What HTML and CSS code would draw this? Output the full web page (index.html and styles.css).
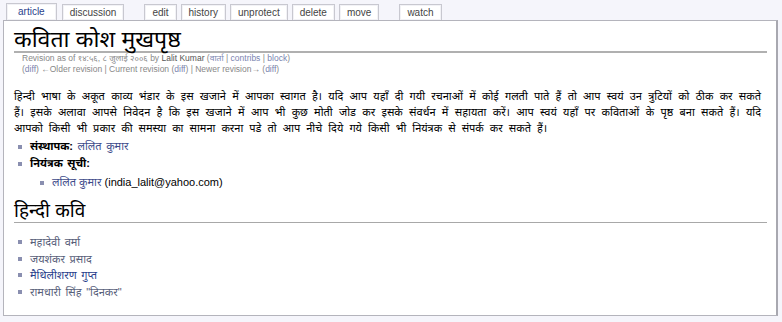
FILE: index.html
```html
<!DOCTYPE html>
<html lang="hi">
<head>
<meta charset="utf-8">
<title>कविता कोश मुखपृष्ठ</title>
<link rel="stylesheet" href="styles.css">
</head>
<body>
<div class="tabs">
  <a class="tab selected" href="#">article</a>
  <a class="tab" href="#">discussion</a>
  <span class="tab-gap"></span>
  <a class="tab" href="#">edit</a>
  <a class="tab" href="#">history</a>
  <a class="tab" href="#">unprotect</a>
  <a class="tab" href="#">delete</a>
  <a class="tab" href="#">move</a>
  <span class="tab-gap"></span>
  <a class="tab" href="#">watch</a>
</div>
<div class="content">
  <h1 class="title">कविता कोश मुखपृष्ठ</h1>
  <div class="sub">
    <div>Revision as of १४:५६, ८ जुलाई २००६ by <a class="user" href="#">Lalit Kumar</a> (<a href="#">वार्ता</a> | <a href="#">contribs</a> | <a href="#">block</a>)</div>
    <div>(<a href="#">diff</a>) ←Older revision | Current revision (<a href="#">diff</a>) | Newer revision→ (<a href="#">diff</a>)</div>
  </div>
  <p class="intro">हिन्दी भाषा के अकूत काव्य भंडार के इस खजाने में आपका स्वागत है। यदि आप यहाँ दी गयी रचनाओं में कोई गलती पाते हैं तो आप स्वयं उन त्रुटियों को ठीक कर सकते हैं। इसके अलावा आपसे निवेदन है कि इस खजाने में आप भी कुछ मोती जोड कर इसके संवर्धन में सहायता करें। आप स्वयं यहाँ पर कविताओं के पृष्ठ बना सकते हैं। यदि आपको किसी भी प्रकार की समस्या का सामना करना पडे तो आप नीचे दिये गये किसी भी नियंत्रक से संपर्क कर सकते हैं।</p>
  <ul class="list">
    <li><b>संस्थापक:</b> <a href="#">ललित कुमार</a></li>
    <li><b>नियंत्रक सूची:</b>
      <ul class="list sub-list">
        <li><a href="#">ललित कुमार</a> (india_lalit@yahoo.com)</li>
      </ul>
    </li>
  </ul>
  <h2 class="section">हिन्दी कवि</h2>
  <ul class="list poets">
    <li><a href="#">महादेवी वर्मा</a></li>
    <li><a href="#">जयशंकर प्रसाद</a></li>
    <li><a class="blue" href="#">मैथिलीशरण गुप्त</a></li>
    <li><a href="#">रामधारी सिंह "दिनकर"</a></li>
  </ul>
</div>
</body>
</html>
```

FILE: styles.css
```css
html, body {
  margin: 0;
  padding: 0;
}
body {
  background: #f5f5fb;
  font-family: "Liberation Sans", "Noto Sans Devanagari", "Lohit Devanagari", "Noto Sans", sans-serif;
  color: #000;
  font-size: 11px;
  width: 782px;
  height: 322px;
  overflow: hidden;
}
a {
  color: #3d4b8a;
  text-decoration: none;
}
.tabs {
  display: flex;
  align-items: flex-end;
  gap: 4px;
  padding: 3px 0 0 6px;
  height: 17px;
}
.tab {
  display: block;
  height: 15px;
  line-height: 15px;
  padding: 0 7px;
  font-size: 10px;
  color: #444;
  background: #fff;
  border: 1px solid #c8c8d0;
  border-bottom: none;
  box-shadow: inset 0 0 0 1px #f2f2f6;
}
.tab.selected {
  color: #2a3f8c;
  padding: 0 11px;
  height: 16px;
  margin-right: 1px;
  position: relative;
  z-index: 1;
}
.tab-gap {
  width: 12px;
}
.content {
  margin: 0 4px 0 3px;
  background: #fff;
  border: 1px solid #b4b4bc;
  border-right: 2px solid #a8a8b0;
  height: 296px;
  padding: 6px 9px 0 10px;
  box-sizing: border-box;
}
.title {
  margin: 0;
  font-size: 23px;
  font-weight: normal;
  line-height: 24px;
  border-bottom: 2px solid #b0b0b0;
  padding-bottom: 0;
}
.sub {
  margin: 0 0 0 8px;
  font-size: 8.5px;
  line-height: 11px;
  color: #888;
}
.sub a {
  color: #7a84b0;
}
.sub a.user {
  color: #555;
}
.intro {
  margin: 13px 6px 0 0;
  text-align: justify;
  line-height: 16px;
  font-size: 11px;
  word-spacing: 3px;
}
.list {
  margin: 2px 0 0 0;
  padding: 0 0 0 16px;
  list-style: none;
}
.list li {
  position: relative;
  line-height: 17px;
  word-spacing: 1.5px;
}
.list li::before {
  content: "";
  position: absolute;
  left: -12px;
  top: 7px;
  width: 4px;
  height: 4px;
  background: #8a8fb0;
}
.sub-list {
  margin: 0;
  padding-left: 22px;
}
.sub-list li {
  line-height: 20px;
  word-spacing: 0;
}
.sub-list li::before {
  top: 9px;
}
.section {
  margin: 8px 0 0 0;
  font-size: 19px;
  font-weight: normal;
  line-height: 22px;
  border-bottom: 1px solid #a8a8a8;
}
.poets {
  margin-top: 11px;
}
.poets li {
  line-height: 16.5px;
  color: #555;
}
.poets li::before {
  top: 6px;
}
.poets a {
  color: #58607a;
}
.poets a.blue {
  color: #2a3f8c;
}
```
